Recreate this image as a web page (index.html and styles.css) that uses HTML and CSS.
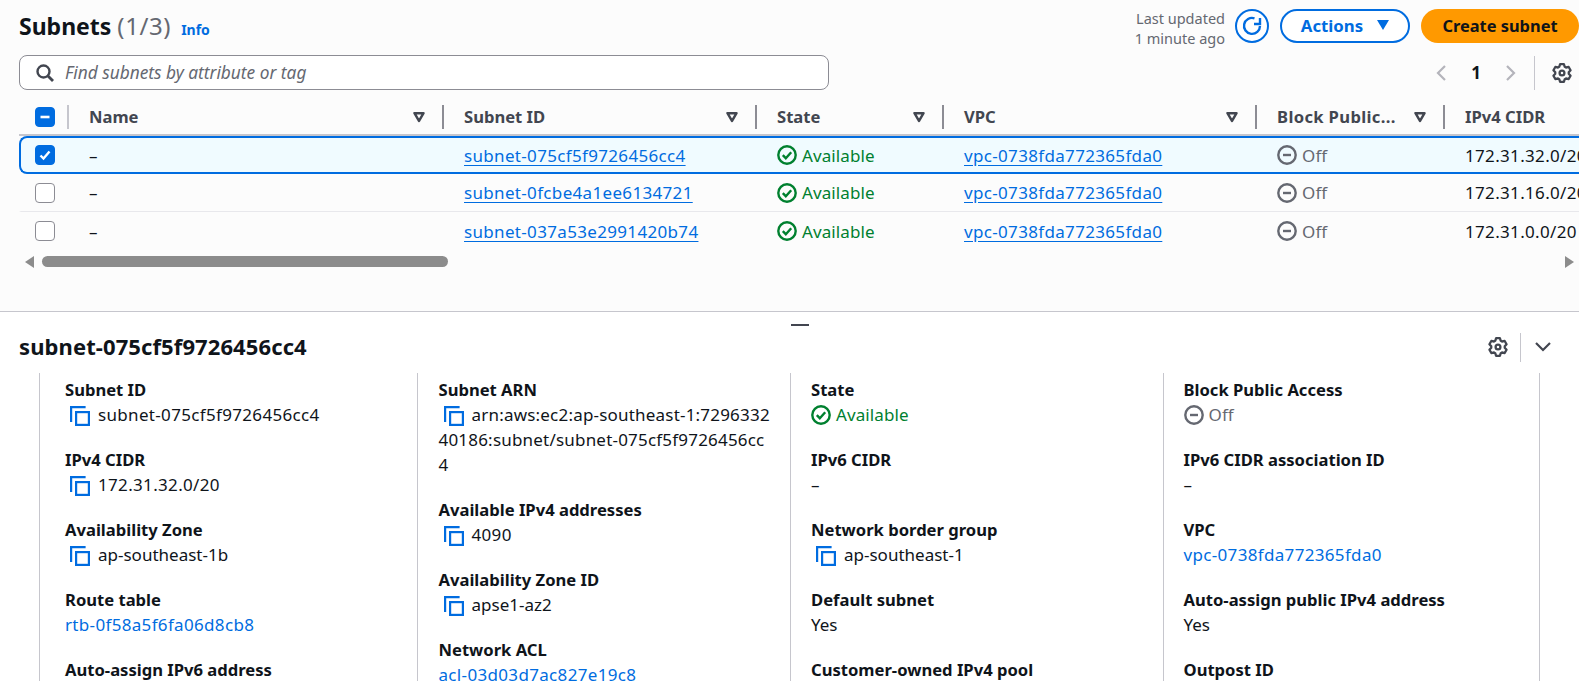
FILE: index.html
```html
<!DOCTYPE html>
<html lang="en">
<head>
    <meta charset="UTF-8">
    <meta name="viewport" content="width=device-width, initial-scale=1.0">
    <title>Subnets</title>
    <link rel="stylesheet" href="styles.css">
</head>
<body>
    <!-- Shared icons -->
    <svg class="icon-defs" aria-hidden="true">
        <symbol id="i-copy" viewBox="0 0 20 20"><path d="M1.1 16V1.1h14.5" fill="none" stroke="currentColor" stroke-width="2.2"/><rect x="6.1" y="6.1" width="12.8" height="12.8" fill="none" stroke="currentColor" stroke-width="2.2"/></symbol>
        <symbol id="i-ok" viewBox="0 0 20 20"><circle cx="10" cy="10" r="8.7" fill="none" stroke="currentColor" stroke-width="2.4"/><path d="M5.8 10.2l3 3 5.4-6" fill="none" stroke="currentColor" stroke-width="2.4"/></symbol>
        <symbol id="i-off" viewBox="0 0 20 20"><circle cx="10" cy="10" r="8.7" fill="none" stroke="currentColor" stroke-width="2.4"/><path d="M6 10h8" fill="none" stroke="currentColor" stroke-width="2.4"/></symbol>
        <symbol id="i-filter" viewBox="0 0 12 12"><path d="M1.5 2.2h9L6 10z" fill="none" stroke="currentColor" stroke-width="2.5" stroke-linejoin="round"/></symbol>
        <symbol id="i-gear" viewBox="0 0 20 20"><path d="M7.23 3.79L8.13 1.2H11.87L12.77 3.79L14 4.5L16.69 3.98L18.56 7.22L16.76 9.29V10.71L18.56 12.78L16.69 16.02L14 15.5L12.77 16.21L11.87 18.8H8.13L7.23 16.21L6 15.5L3.31 16.02L1.44 12.78L3.24 10.71V9.29L1.44 7.22L3.31 3.98L6 4.5z" fill="none" stroke="currentColor" stroke-width="2.3" stroke-linejoin="round"/><circle cx="10" cy="10" r="2.4" fill="none" stroke="currentColor" stroke-width="2.3"/></symbol>
    </svg>

    <section class="list-panel">
        <div class="top-bar">
            <h1 class="page-title">Subnets <span class="count">(1/3)</span> <a class="info-link">Info</a></h1>
            <div class="actions">
                <div class="last-updated">Last updated<br>1 minute ago</div>
                <button class="btn-refresh" aria-label="Refresh">
                    <svg width="24" height="24" viewBox="0 0 24 24"><path d="M14.5 4.3A8 8 0 1 0 20 12" fill="none" stroke="currentColor" stroke-width="2.4"/><path d="M20 4v6h-6" fill="none" stroke="currentColor" stroke-width="2.4"/></svg>
                </button>
                <button class="btn-actions">Actions <svg width="12" height="10" viewBox="0 0 12 10"><path d="M0 0h12L6 10z" fill="currentColor"/></svg></button>
                <button class="btn-create">Create subnet</button>
            </div>
        </div>

        <div class="search-row">
            <div class="search-box">
                <svg width="18" height="18" viewBox="0 0 18 18"><circle cx="7.5" cy="7.5" r="6" fill="none" stroke="currentColor" stroke-width="2.4"/><path d="M12 12l5 5" fill="none" stroke="currentColor" stroke-width="2.8"/></svg>
                <span class="placeholder">Find subnets by attribute or tag</span>
            </div>
            <div class="pager">
                <svg class="pager-arrow" width="10" height="16" viewBox="0 0 10 16"><path d="M9 1L2 8l7 7" fill="none" stroke="currentColor" stroke-width="2.2"/></svg>
                <span class="page-num">1</span>
                <svg class="pager-arrow" width="10" height="16" viewBox="0 0 10 16"><path d="M1 1l7 7-7 7" fill="none" stroke="currentColor" stroke-width="2.2"/></svg>
                <span class="pager-sep"></span>
                <svg class="gear" width="20" height="20"><use href="#i-gear"/></svg>
            </div>
        </div>

        <div class="table-wrap">
            <table class="subnets">
                <colgroup>
                    <col class="c-check"><col class="c-name"><col class="c-id"><col class="c-state"><col class="c-vpc"><col class="c-block"><col class="c-cidr">
                </colgroup>
                <thead>
                    <tr>
                        <th><span class="cb cb-on"><svg width="12" height="12" viewBox="0 0 12 12"><path d="M1.5 6h9" stroke="#fff" stroke-width="2.6"/></svg></span></th>
                        <th><div class="th-inner th-light">Name <svg class="filter" width="12" height="12"><use href="#i-filter"/></svg></div></th>
                        <th><div class="th-inner">Subnet ID <svg class="filter" width="12" height="12"><use href="#i-filter"/></svg></div></th>
                        <th><div class="th-inner">State <svg class="filter" width="12" height="12"><use href="#i-filter"/></svg></div></th>
                        <th><div class="th-inner">VPC <svg class="filter" width="12" height="12"><use href="#i-filter"/></svg></div></th>
                        <th><div class="th-inner th-wide">Block Public... <svg class="filter" width="12" height="12"><use href="#i-filter"/></svg></div></th>
                        <th><div class="th-inner">IPv4 CIDR</div></th>
                    </tr>
                </thead>
                <tbody>
                    <tr class="selected">
                        <td><span class="cb cb-on"><svg width="14" height="14" viewBox="0 0 14 14"><path d="M2.5 7.5l3 3 6-7" fill="none" stroke="#fff" stroke-width="2.4"/></svg></span></td>
                        <td>–</td>
                        <td><a class="link digits">subnet-075cf5f9726456cc4</a></td>
                        <td><span class="status ok"><svg width="20" height="20"><use href="#i-ok"/></svg>Available</span></td>
                        <td><a class="link digits">vpc-0738fda772365fda0</a></td>
                        <td><span class="status off"><svg width="20" height="20"><use href="#i-off"/></svg>Off</span></td>
                        <td class="digits">172.31.32.0/20</td>
                    </tr>
                    <tr class="divided">
                        <td><span class="cb"></span></td>
                        <td>–</td>
                        <td><a class="link digits">subnet-0fcbe4a1ee6134721</a></td>
                        <td><span class="status ok"><svg width="20" height="20"><use href="#i-ok"/></svg>Available</span></td>
                        <td><a class="link digits">vpc-0738fda772365fda0</a></td>
                        <td><span class="status off"><svg width="20" height="20"><use href="#i-off"/></svg>Off</span></td>
                        <td class="digits">172.31.16.0/20</td>
                    </tr>
                    <tr>
                        <td><span class="cb"></span></td>
                        <td>–</td>
                        <td><a class="link digits">subnet-037a53e2991420b74</a></td>
                        <td><span class="status ok"><svg width="20" height="20"><use href="#i-ok"/></svg>Available</span></td>
                        <td><a class="link digits">vpc-0738fda772365fda0</a></td>
                        <td><span class="status off"><svg width="20" height="20"><use href="#i-off"/></svg>Off</span></td>
                        <td class="digits">172.31.0.0/20</td>
                    </tr>
                </tbody>
            </table>
        </div>

        <div class="scrollbar">
            <span class="arrow-left"></span>
            <span class="thumb"></span>
            <span class="arrow-right"></span>
        </div>
    </section>

    <section class="detail-panel">
        <div class="drag-handle"></div>
        <div class="detail-head">
            <h2 class="detail-title">subnet-075cf5f9726456cc4</h2>
            <div class="detail-tools">
                <svg class="gear" width="20" height="20"><use href="#i-gear"/></svg>
                <span class="tool-sep"></span>
                <svg class="chevron" width="16" height="10" viewBox="0 0 16 10"><path d="M1 1l7 7 7-7" fill="none" stroke="currentColor" stroke-width="2.2"/></svg>
            </div>
        </div>

        <div class="detail-grid">
            <div class="detail-col first">
                <div class="field"><div class="label">Subnet ID</div><div class="value copy digits"><svg width="20" height="20"><use href="#i-copy"/></svg>subnet-075cf5f9726456cc4</div></div>
                <div class="field"><div class="label">IPv4 CIDR</div><div class="value copy digits"><svg width="20" height="20"><use href="#i-copy"/></svg>172.31.32.0/20</div></div>
                <div class="field"><div class="label">Availability Zone</div><div class="value copy"><svg width="20" height="20"><use href="#i-copy"/></svg>ap-southeast-1b</div></div>
                <div class="field"><div class="label">Route table</div><div class="value"><a class="plain-link digits">rtb-0f58a5f6fa06d8cb8</a></div></div>
                <div class="field"><div class="label">Auto-assign IPv6 address</div></div>
            </div>
            <div class="detail-col second">
                <div class="field"><div class="label">Subnet ARN</div><div class="value copy arn"><svg width="20" height="20"><use href="#i-copy"/></svg>arn:aws:ec2:ap-southeast-1:7296332<br>40186:subnet/subnet-075cf5f9726456cc<br>4</div></div>
                <div class="field"><div class="label">Available IPv4 addresses</div><div class="value copy digits"><svg width="20" height="20"><use href="#i-copy"/></svg>4090</div></div>
                <div class="field"><div class="label">Availability Zone ID</div><div class="value copy"><svg width="20" height="20"><use href="#i-copy"/></svg>apse1-az2</div></div>
                <div class="field"><div class="label">Network ACL</div><div class="value"><a class="plain-link digits">acl-03d03d7ac827e19c8</a></div></div>
            </div>
            <div class="detail-col">
                <div class="field"><div class="label">State</div><div class="value"><span class="status ok"><svg width="20" height="20"><use href="#i-ok"/></svg>Available</span></div></div>
                <div class="field"><div class="label">IPv6 CIDR</div><div class="value">–</div></div>
                <div class="field"><div class="label">Network border group</div><div class="value copy"><svg width="20" height="20"><use href="#i-copy"/></svg>ap-southeast-1</div></div>
                <div class="field"><div class="label">Default subnet</div><div class="value">Yes</div></div>
                <div class="field"><div class="label">Customer-owned IPv4 pool</div></div>
            </div>
            <div class="detail-col last">
                <div class="field"><div class="label">Block Public Access</div><div class="value"><span class="status off"><svg width="20" height="20"><use href="#i-off"/></svg>Off</span></div></div>
                <div class="field"><div class="label">IPv6 CIDR association ID</div><div class="value">–</div></div>
                <div class="field"><div class="label">VPC</div><div class="value"><a class="plain-link digits">vpc-0738fda772365fda0</a></div></div>
                <div class="field"><div class="label">Auto-assign public IPv4 address</div><div class="value">Yes</div></div>
                <div class="field"><div class="label">Outpost ID</div></div>
            </div>
        </div>
    </section>
</body>
</html>
```

FILE: styles.css
```css
body {
    margin: 0;
    height: 681px;
    overflow: hidden;
    background-color: #ffffff;
    color: #0f141a;
    font-family: "Noto Sans", "Open Sans", sans-serif;
    font-size: 17px;
    line-height: 25px;
}

.icon-defs {
    display: none;
}

/* Numbers in the reference render a little wider */
.digits {
    letter-spacing: 0.33px;
}

/* Top panel with the subnet list */
.list-panel {
    height: 312px;
    box-sizing: border-box;
    padding-top: 9px;
    background-color: #fcfcfc;
    border-bottom: 1px solid #c6c6cd;
}

.top-bar {
    display: flex;
    justify-content: space-between;
    align-items: center;
    height: 34px;
    padding-left: 19px;
}

.page-title {
    margin: 0;
    padding-top: 3px;
    font-size: 23px;
    font-weight: 700;
    line-height: 34px;
}

.count {
    font-size: 24px;
    font-weight: 400;
    letter-spacing: 0.6px;
    color: #656871;
}

.info-link {
    margin-left: 4px;
    font-size: 14px;
    font-weight: 700;
    color: #006ce0;
}

.actions {
    display: flex;
    align-items: center;
}

.last-updated {
    margin: 3px 10px 0 0;
    font-size: 14.5px;
    line-height: 20px;
    text-align: right;
    color: #656871;
}

.btn-refresh {
    display: flex;
    align-items: center;
    justify-content: center;
    width: 34px;
    height: 34px;
    padding: 0;
    margin-right: 11px;
    color: #006ce0;
    background-color: #ffffff;
    border: 2px solid #006ce0;
    border-radius: 50%;
}

.btn-actions {
    display: flex;
    align-items: center;
    justify-content: center;
    gap: 14px;
    width: 130px;
    height: 34px;
    margin-right: 11px;
    padding: 0 0 2px;
    font: 700 16.8px "Noto Sans", sans-serif;
    color: #006ce0;
    background-color: #ffffff;
    border: 2px solid #006ce0;
    border-radius: 17px;
}

.btn-create {
    width: 158px;
    height: 34px;
    padding: 0 0 2px;
    font: 700 16.4px "Noto Sans", sans-serif;
    color: #0f141a;
    background-color: #ff9900;
    border: none;
    border-radius: 17px;
}

.search-row {
    display: flex;
    align-items: center;
    justify-content: space-between;
    margin-top: 12px;
    padding-left: 19px;
}

.search-box {
    display: flex;
    align-items: center;
    gap: 11px;
    width: 810px;
    height: 35px;
    box-sizing: border-box;
    padding-left: 16px;
    color: #656871;
    background-color: #ffffff;
    border: 1px solid #8c8c94;
    border-radius: 8px;
}

.search-box svg {
    color: #424650;
}

.placeholder {
    font-size: 17.3px;
    font-style: italic;
}

.pager {
    display: flex;
    align-items: center;
    height: 35px;
    padding-right: 7px;
}

.pager-arrow {
    color: #b4b4bb;
}

.page-num {
    width: 60px;
    text-align: center;
    font-weight: 700;
}

.pager-sep {
    width: 1px;
    height: 34px;
    margin: 0 17px 0 18px;
    background-color: #c6c6cd;
}

.gear {
    color: #424650;
}

/* Table */
.table-wrap {
    margin-top: 10px;
    overflow: hidden;
}

.subnets {
    width: 1700px;
    margin-left: 19px;
    table-layout: fixed;
    border-collapse: separate;
    border-spacing: 0;
}

.c-check { width: 48px; }
.c-name { width: 375px; }
.c-id { width: 313px; }
.c-state { width: 187px; }
.c-vpc { width: 313px; }
.c-block { width: 188px; }
.c-cidr { width: 276px; }

.subnets th {
    height: 34px;
    padding: 0;
    text-align: left;
    font-size: 16.6px;
    font-weight: 700;
    color: #424650;
    border-bottom: 2px solid #c6c6cd;
}

.subnets th:first-child {
    padding-left: 16px;
}

.th-inner {
    display: flex;
    align-items: center;
    justify-content: space-between;
    height: 24px;
    box-sizing: border-box;
    padding: 0 17px 2px 20px;
    border-left: 2px solid #8c8c94;
}

.th-light {
    border-left-color: #c6c6cd;
}

.th-wide {
    letter-spacing: 0.35px;
}

.filter {
    margin-top: 2px;
    color: #424650;
}

.subnets td {
    height: 38px;
    box-sizing: border-box;
    padding: 0 0 0 22px;
    border-top: 2px solid transparent;
    border-bottom: 2px solid transparent;
    white-space: nowrap;
}

.subnets td:first-child {
    padding-left: 14px;
    border-left: 2px solid transparent;
}

.selected td {
    background-color: #f0fbff;
    border-top-color: #006ce0;
    border-bottom-color: #006ce0;
}

.selected td:first-child {
    border-left-color: #006ce0;
    border-radius: 8px 0 0 8px;
}

.divided td {
    border-top: none;
    border-bottom: 1px solid #e8e8ec;
}

.cb {
    display: flex;
    align-items: center;
    justify-content: center;
    width: 20px;
    height: 20px;
    box-sizing: border-box;
    background-color: #ffffff;
    border: 1px solid #8c8c94;
    border-radius: 4px;
}

.cb-on {
    background-color: #006ce0;
    border-color: #006ce0;
}

.link {
    color: #006ce0;
    text-decoration: underline;
    text-underline-offset: 3px;
}

.plain-link {
    color: #006ce0;
}

.status {
    display: inline-flex;
    align-items: center;
    gap: 5px;
    vertical-align: top;
    letter-spacing: 0.1px;
}

.ok {
    color: #00802f;
}

.off {
    color: #656871;
}

.scrollbar {
    display: flex;
    align-items: center;
    height: 11px;
    margin-top: 6px;
    padding-left: 25px;
}

.arrow-left {
    border-top: 6px solid transparent;
    border-bottom: 6px solid transparent;
    border-right: 9px solid #8c8c8c;
}

.thumb {
    width: 406px;
    height: 11px;
    margin-left: 8px;
    background-color: #8c8c8c;
    border-radius: 6px;
}

.arrow-right {
    margin-left: 1117px;
    border-top: 6px solid transparent;
    border-bottom: 6px solid transparent;
    border-left: 9px solid #8c8c8c;
}

/* Bottom split panel with the details */
.drag-handle {
    width: 18px;
    height: 2px;
    margin: 12px 0 0 791px;
    background-color: #424650;
}

.detail-head {
    display: flex;
    align-items: center;
    justify-content: space-between;
    height: 30px;
    margin-top: 6px;
    padding: 0 28px 0 19px;
}

.detail-title {
    margin: 0;
    padding-bottom: 2px;
    font-size: 22px;
    font-weight: 700;
    letter-spacing: 0.1px;
}

.detail-tools {
    display: flex;
    align-items: center;
}

.tool-sep {
    width: 1px;
    height: 29px;
    margin: 0 14px 0 12px;
    background-color: #c6c6cd;
}

.chevron {
    color: #424650;
}

.detail-grid {
    display: grid;
    grid-template-columns: 377.5px 373.5px 372.5px 377.5px;
    width: 1501px;
    margin: 11px 0 0 39px;
}

.detail-col {
    padding: 4px 20px 0 20px;
    border-left: 1px solid #c6c6cd;
}

.detail-col.first {
    padding-left: 25px;
}

.detail-col.second {
    padding-left: 21px;
}

.detail-col.last {
    border-right: 1px solid #c6c6cd;
}

.field {
    margin-bottom: 20px;
}

.label {
    font-size: 16.6px;
    font-weight: 700;
}

.copy svg {
    margin: 0 8px 0 5px;
    vertical-align: -5px;
    color: #006ce0;
}

.arn {
    letter-spacing: 0.2px;
}
```
